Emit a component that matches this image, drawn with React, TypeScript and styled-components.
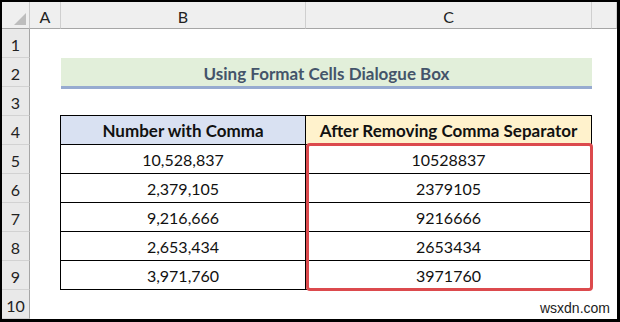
import styled, { createGlobalStyle } from 'styled-components';

const GlobalStyle = createGlobalStyle`
  html, body {
    margin: 0;
    padding: 0;
    background: #fff;
  }
  body {
    font-family: Lato, "Liberation Sans", sans-serif;
  }
`;

const Sheet = styled.div`
  width: 620px;
  height: 322px;
  box-sizing: border-box;
  border: solid #000;
  border-width: 2px 3px 3px 2px;
  display: grid;
  grid-template-columns: 28px 31px 245px 286px 25px;
  grid-template-rows: 27px repeat(10, 29px);
  background: #fff;
  overflow: hidden;
`;

const Corner = styled.div`
  grid-column: 1;
  grid-row: 1;
  background: #efefef;
  border-right: 1px solid #c8c8c8;
  border-bottom: 1px solid #a6a6a6;
  display: flex;
  align-items: flex-end;
  justify-content: flex-end;
  padding: 0 3px 3px 0;
  box-sizing: border-box;
`;

const ColHeader = styled.div<{ $col: number }>`
  grid-column: ${(p) => p.$col};
  grid-row: 1;
  background: #efefef;
  border-right: 1px solid #cfcfcf;
  border-bottom: 1px solid #a6a6a6;
  box-sizing: border-box;
  display: flex;
  align-items: center;
  justify-content: center;
  font-size: 16px;
  color: #222;
  padding-top: 2px;
`;

const RowHeader = styled.div<{ $row: number }>`
  grid-column: 1;
  grid-row: ${(p) => p.$row + 1};
  background: #e9e9e9;
  border-right: 1px solid #a6a6a6;
  border-bottom: 1px solid #d2d2d2;
  box-sizing: border-box;
  display: flex;
  align-items: center;
  justify-content: center;
  font-size: 16px;
  color: #222;
  padding-top: 2px;
`;

const Title = styled.div`
  grid-column: 3 / 5;
  grid-row: 3;
  margin-bottom: -2px;
  background: #e2efda;
  border-bottom: 3px solid #97abd0;
  display: flex;
  align-items: center;
  justify-content: center;
  font-size: 17px;
  font-weight: 700;
  color: #44546a;
  padding-top: 2px;
`;

const Table = styled.div`
  grid-column: 3 / 5;
  grid-row: 5 / 11;
  display: grid;
  grid-template-columns: 245px 286px;
  grid-template-rows: repeat(6, 1fr);
  border-top: 1px solid #000;
  border-left: 1px solid #000;
  margin-left: -1px;
  margin-top: -1px;
`;

const Cell = styled.div<{ $bg?: string; $bold?: boolean }>`
  background: ${(p) => p.$bg ?? '#fff'};
  border-right: 1px solid #000;
  border-bottom: 1px solid #000;
  display: flex;
  align-items: center;
  justify-content: center;
  font-size: ${(p) => (p.$bold ? 17 : 16)}px;
  font-weight: ${(p) => (p.$bold ? 700 : 400)};
  color: #111;
  padding-top: 1px;
`;

const Highlight = styled.div`
  grid-column: 4;
  grid-row: 6 / 11;
  margin: -2px -1px -1px 0;
  border: 3px solid #dc4a4d;
  border-radius: 4px;
  pointer-events: none;
  z-index: 1;
`;

const Watermark = styled.div`
  grid-column: 4 / 6;
  grid-row: 11;
  justify-self: end;
  align-self: end;
  padding: 0 7px 3px 0;
  font-family: "Liberation Sans", Arial, sans-serif;
  font-size: 14px;
  color: #1c1c1c;
`;

const rows = [
  ['10,528,837', '10528837'],
  ['2,379,105', '2379105'],
  ['9,216,666', '9216666'],
  ['2,653,434', '2653434'],
  ['3,971,760', '3971760'],
];

export default function App() {
  return (
    <>
      <GlobalStyle />
      <Sheet>
        <Corner>
          <svg width="12" height="12" viewBox="0 0 12 12">
            <polygon points="12,0 12,12 0,12" fill="#bdbdbd" />
          </svg>
        </Corner>
        <ColHeader $col={2}>A</ColHeader>
        <ColHeader $col={3}>B</ColHeader>
        <ColHeader $col={4}>C</ColHeader>
        <ColHeader $col={5} />
        {Array.from({ length: 10 }, (_, i) => (
          <RowHeader key={i} $row={i + 1}>{i + 1}</RowHeader>
        ))}
        <Title>Using Format Cells Dialogue Box</Title>
        <Table>
          <Cell $bg="#d9e1f2" $bold>Number with Comma</Cell>
          <Cell $bg="#fff2cc" $bold>After Removing Comma Separator</Cell>
          {rows.map(([a, b]) => (
            <>
              <Cell key={a}>{a}</Cell>
              <Cell key={b}>{b}</Cell>
            </>
          ))}
        </Table>
        <Highlight />
        <Watermark>wsxdn.com</Watermark>
      </Sheet>
    </>
  );
}
